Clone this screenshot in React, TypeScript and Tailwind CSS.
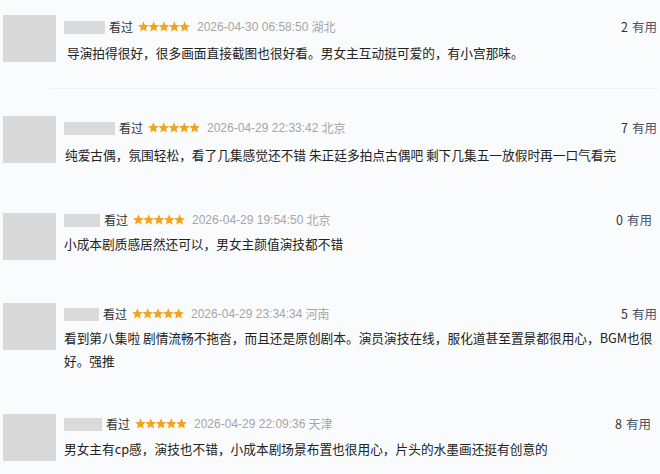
import React from 'react';

type Review = {
  top: string;
  nameW: string;
  metaMt: string;
  bodyMt: string;
  bodyMl: string;
  pr: string;
  date: string;
  place: string;
  useful: number;
  lines: string[];
  divider?: boolean;
};

const reviews: Review[] = [
  {
    top: 'h-[101px]',
    nameW: 'w-[41px]',
    metaMt: 'mt-[5px]',
    bodyMt: 'mt-[7px]',
    bodyMl: 'ml-[3px]',
    pr: 'pr-[3px]',
    date: '2026-04-30 06:58:50',
    place: '湖北',
    useful: 2,
    lines: ['导演拍得很好，很多画面直接截图也很好看。男女主互动挺可爱的，有小宫那味。'],
    divider: true,
  },
  {
    top: 'h-[97px]',
    nameW: 'w-[51px]',
    metaMt: 'mt-[5px]',
    bodyMt: 'mt-[8px]',
    bodyMl: 'ml-[1px]',
    pr: 'pr-[3px]',
    date: '2026-04-29 22:33:42',
    place: '北京',
    useful: 7,
    lines: ['纯爱古偶，氛围轻松，看了几集感觉还不错 朱正廷多拍点古偶吧 剩下几集五一放假时再一口气看完'],
  },
  {
    top: 'h-[90px]',
    nameW: 'w-[36px]',
    metaMt: 'mt-0',
    bodyMt: 'mt-[5px]',
    bodyMl: 'ml-0',
    pr: 'pr-[8px]',
    date: '2026-04-29 19:54:50',
    place: '北京',
    useful: 0,
    lines: ['小成本剧质感居然还可以，男女主颜值演技都不错'],
  },
  {
    top: 'h-[111px]',
    nameW: 'w-[35px]',
    metaMt: 'mt-[4px]',
    bodyMt: 'mt-[5px]',
    bodyMl: 'ml-0',
    pr: 'pr-[3px]',
    date: '2026-04-29 23:34:34',
    place: '河南',
    useful: 5,
    lines: [
      '看到第八集啦 剧情流畅不拖沓，而且还是原创剧本。演员演技在线，服化道甚至置景都很用心，BGM也很',
      '好。强推',
    ],
  },
  {
    top: 'h-[60px]',
    nameW: 'w-[38px]',
    metaMt: 'mt-[3px]',
    bodyMt: 'mt-[6px]',
    bodyMl: 'ml-0',
    pr: 'pr-[9px]',
    date: '2026-04-29 22:09:36',
    place: '天津',
    useful: 8,
    lines: ['男女主有cp感，演技也不错，小成本剧场景布置也很用心，片头的水墨画还挺有创意的'],
  },
];

function Stars() {
  const star = (cx: number) => {
    const pts: string[] = [];
    for (let i = 0; i < 10; i++) {
      const r = i % 2 === 0 ? 5.7 : 2.6;
      const a = (Math.PI / 5) * i - Math.PI / 2;
      pts.push(`${(cx + r * Math.cos(a)).toFixed(2)},${(6 + r * Math.sin(a)).toFixed(2)}`);
    }
    return <polygon key={cx} points={pts.join(' ')} fill="#f3a41e" />;
  };
  return (
    <svg width="52" height="12" viewBox="0 0 52 12" className="shrink-0">
      {[5.4, 15.7, 26, 36.3, 46.6].map(star)}
    </svg>
  );
}

function ReviewRow({ r }: { r: Review }) {
  return (
    <div className={`${r.top} shrink-0 flex flex-col`}>
      <div className="flex">
        <div className="w-[53px] h-[47px] bg-[#d9d9d9] shrink-0" />
        <div className={`flex-1 ml-[8px] ${r.pr}`}>
          <div className={`flex items-center h-[14px] ${r.metaMt} text-[12px]`}>
            <div className={`${r.nameW} h-[13px] bg-[#dadada]`} />
            <span className="ml-[4px] text-[#333] leading-none">看过</span>
            <span className="ml-[5px] flex">
              <Stars />
            </span>
            <span className="ml-[7px] text-[#a6a6a6] leading-none font-['Liberation_Sans','Noto_Sans_CJK_SC',sans-serif]">
              {r.date}
            </span>
            <span className="ml-[3px] text-[#a6a6a6] leading-none">{r.place}</span>
            <span className="ml-auto leading-none text-[12.5px]">
              <span className="text-[#333]">{r.useful}</span>
              <span className="ml-[4px] text-[#4a5268]">有用</span>
            </span>
          </div>
          <div className={`${r.bodyMt} ${r.bodyMl} text-[12.7px] leading-[23px] text-[#222] whitespace-nowrap`}>
            {r.lines.map((l, i) => (
              <div key={i}>{l}</div>
            ))}
          </div>
        </div>
      </div>
      {r.divider && <div className="mt-[24px] ml-[47px] mr-[3px] h-px bg-[#f0f0f3]" />}
    </div>
  );
}

export default function App() {
  return (
    <div className="w-[660px] h-[474px] overflow-hidden bg-[#fafbfc] pt-[15px] pl-[3px] flex flex-col font-['Noto_Sans_CJK_SC',sans-serif]">
      {reviews.map((r, i) => (
        <ReviewRow key={i} r={r} />
      ))}
    </div>
  );
}
